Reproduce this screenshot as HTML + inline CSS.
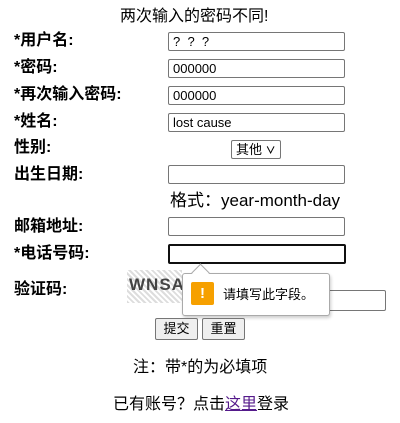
<!DOCTYPE html>
<html><head><meta charset="utf-8"><style>
body{margin:0;width:400px;height:423px;background:#fff;font-family:"Liberation Sans","Noto Sans CJK SC",sans-serif;color:#000;position:relative;overflow:hidden}
.a{position:absolute;white-space:nowrap;line-height:20px}
.l{font-weight:bold;font-size:16px;left:14px}
.i{position:absolute;left:168px;width:173px;height:17px;border:1px solid #767676;border-radius:2px;font-size:13px;line-height:17px;padding-left:4px;box-sizing:content-box}
.btn{position:absolute;top:318px;height:20px;border:1px solid #767676;border-radius:2px;background:#efefef;font-size:13px;line-height:20px;text-align:center}
</style></head><body>
<div class="a" style="left:120px;top:7px;font-size:16px">两次输入的密码不同!</div>
<div class="a l" style="top:31px">*用户名:</div>
<div class="i" style="top:32px;width:171px">? &nbsp;? &nbsp;?</div>
<div class="a l" style="top:58px">*密码:</div>
<div class="i" style="top:59px;width:171px">000000</div>
<div class="a l" style="top:85px">*再次输入密码:</div>
<div class="i" style="top:86px;width:171px">000000</div>
<div class="a l" style="top:112px">*姓名:</div>
<div class="i" style="top:113px;width:171px">lost cause</div>
<div class="a l" style="top:138px">性别:</div>
<div class="a" style="left:231px;top:140px;border:1px solid #767676;border-radius:2px;font-size:13px;line-height:17px;padding-left:4px;box-sizing:border-box;width:50px;height:19px">其他 <b style="font-size:10px">&#x2228;</b></div>
<div class="a l" style="top:165px">出生日期:</div>
<div class="i" style="top:165px;width:171px"></div>
<div class="a" style="left:170px;top:191px;font-size:17px">格式：year-month-day</div>
<div class="a l" style="top:217px">邮箱地址:</div>
<div class="i" style="top:217px;width:171px"></div>
<div class="a l" style="top:244px">*电话号码:</div>
<div class="i" style="top:244px;border:2px solid #101010;height:16px;width:170px"></div>
<div class="a l" style="top:280px">验证码:</div>
<div class="a" style="left:127px;top:270px;width:55px;height:33px;background:repeating-linear-gradient(45deg,#ddd 0 2px,#fff 2px 4px);"><span style="position:absolute;left:2px;top:5px;font:bold 17px 'Liberation Sans';color:#444;letter-spacing:1px">WNSA</span></div>
<div class="a" style="left:200px;top:290px;width:184px;height:19px;border:1px solid #767676;border-radius:2px"></div>
<div class="a" style="left:182px;top:273px;width:146px;height:41px;background:#fff;border:1px solid #aaa;border-radius:3px;box-shadow:1px 2px 3px rgba(0,0,0,.2)"></div>
<div class="a" style="left:194px;top:262px;width:12px;height:12px;background:#fff;border-left:1px solid #aaa;border-top:1px solid #aaa;transform:rotate(45deg) translate(3px,3px)"></div>
<div class="a" style="left:191px;top:282px;width:23px;height:23px;background:#f6a000;border-radius:2px;color:#fff;font:bold 15px 'Liberation Sans';text-align:center;line-height:23px">!</div>
<div class="a" style="left:223px;top:285px;font-size:13px">请填写此字段。</div>
<div class="btn" style="left:155px;width:41px">提交</div>
<div class="btn" style="left:202px;width:41px">重置</div>
<div class="a" style="left:133px;top:358px;font-size:16px">注：带*的为必填项</div>
<div class="a" style="left:113px;top:395px;font-size:16px">已有账号？点击<span style="color:#551a8b;text-decoration:underline">这里</span>登录</div>
</body></html>
